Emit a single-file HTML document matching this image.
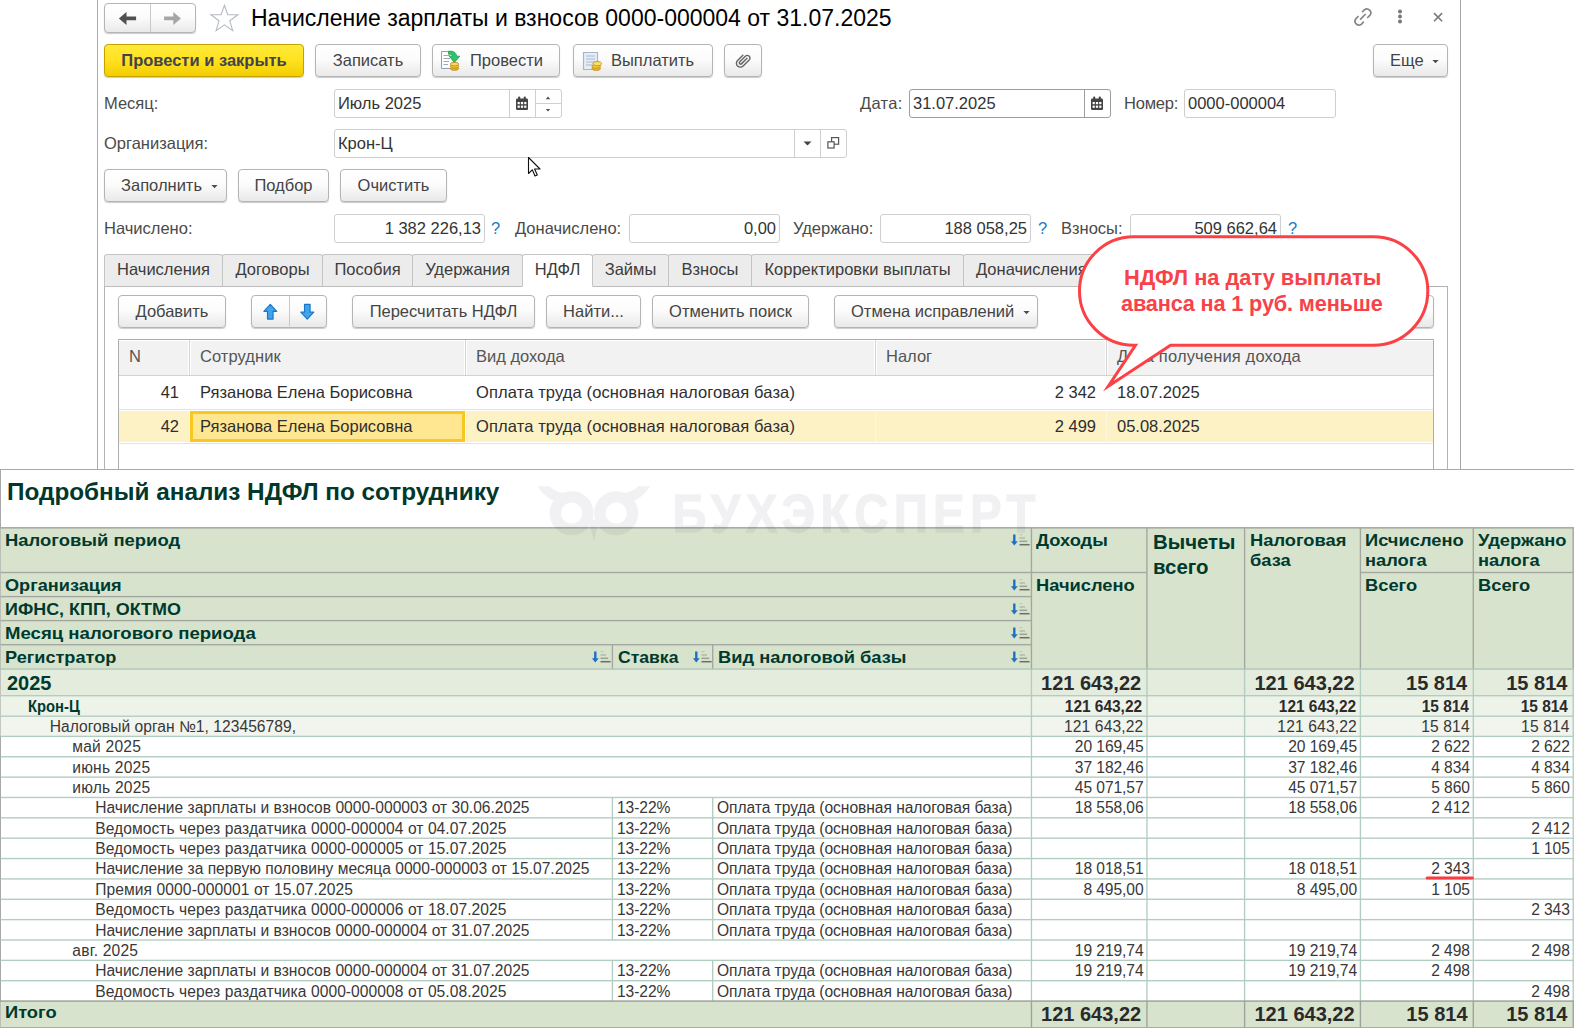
<!DOCTYPE html><html lang="ru"><head><meta charset="utf-8"><title>Начисление зарплаты и взносов</title><style>
*{box-sizing:border-box;margin:0;padding:0}
html,body{width:1574px;height:1028px;overflow:hidden;background:#fff}
body{font-family:"Liberation Sans",sans-serif;font-size:16.5px;color:#333;position:relative}
.a{position:absolute;white-space:nowrap}
.t{position:absolute;white-space:nowrap;line-height:20px;height:20px;color:#4a4a4a;margin-top:-1px}
.btn{position:absolute;border:1px solid #b4b4b4;border-radius:4px;background:linear-gradient(#ffffff 0%,#fcfcfc 45%,#e9e9e9 100%);box-shadow:0 1px 1px rgba(0,0,0,.2);color:#444;text-align:center;white-space:nowrap;height:33px;line-height:30px;font-size:16.5px}
.btn.y{background:linear-gradient(#ffea3a 0%,#ffe11f 50%,#f2ce00 100%);border-color:#c4a300;color:#43434c;font-weight:bold}
.inp{position:absolute;border:1px solid #cfcfcf;border-radius:3px;background:#fff;height:29px;line-height:27px;color:#333;white-space:nowrap;padding:0 3px}
.inp.r{text-align:right}
.q{position:absolute;color:#1a7ac4;font-size:16.5px;line-height:20px;margin-top:-1px}
.tab{position:absolute;top:254px;height:33px;border:1px solid #c4c4c4;border-bottom:1px solid #bdbdbd;background:#ececec;border-radius:3px 3px 0 0;line-height:29px;text-align:center;color:#3c3c3c;white-space:nowrap}
.tab.act{background:#fff;border-bottom-color:#fff;z-index:2}
.vl{position:absolute;width:1px;background:#b0b0b0}
.hl{position:absolute;height:1px;background:#b0b0b0}
.th{position:absolute;top:340px;height:35px;line-height:33px;color:#555;white-space:nowrap;padding-left:10px}
.td{position:absolute;height:33px;line-height:32px;color:#2e2e2e;white-space:nowrap}
/* report */
.rp{position:absolute;left:0;top:469px;width:1574px;height:559px;background:#fff;border-top:1px solid #a8a8a8;border-left:1px solid #a8a8a8}
.hc{position:absolute;background:#d8e4cd;color:#003d2f;font-weight:bold;font-size:16px;line-height:18px;white-space:nowrap;overflow:hidden}
.rw{position:absolute;left:1px;width:1573px}
.c{position:absolute;white-space:nowrap;color:#333;font-size:15.5px}
.n{position:absolute;white-space:nowrap;color:#333;font-size:15.5px;text-align:right}
</style></head><body>
<div class="vl" style="left:97px;top:0;height:469px;background:#ababab"></div>
<div class="vl" style="left:1460px;top:0;height:469px;background:#a6a6a6"></div>
<div class="btn" style="left:104px;top:3px;width:92px;height:30px"></div>
<div class="vl" style="left:150px;top:4px;height:28px;background:#c8c8c8"></div>
<svg class="a" style="left:117px;top:10px" width="22" height="17" viewBox="0 0 22 17"><path d="M1.9 8.4 L9.5 2 V6.6 H19.1 V10.2 H9.5 V14.9 Z" fill="#505050"/></svg>
<svg class="a" style="left:162px;top:10px" width="22" height="17" viewBox="0 0 22 17"><path d="M18.9 8.4 L11.3 2 V6.6 H2.1 V10.2 H11.3 V14.9 Z" fill="#a6a6a6"/></svg>
<svg class="a" style="left:209px;top:3px" width="32" height="30" viewBox="0 0 32 30"><path d="M15.4 2.3 L18.7 11.6 L28.9 11.8 L20.8 17.8 L23.7 27.6 L15.4 21.9 L7.1 27.6 L10 17.8 L1.9 11.8 L12.1 11.6 Z" fill="#fff" stroke="#b3bac2" stroke-width="1.1" stroke-linejoin="miter"/></svg>
<div class="a" style="left:251px;top:4px;font-size:23px;line-height:28px;color:#000">Начисление зарплаты и взносов 0000-000004 от 31.07.2025</div>
<svg class="a" style="left:1352px;top:6px" width="22" height="22" viewBox="0 0 22 22" fill="none" stroke="#868686" stroke-width="1.7" stroke-linecap="round"><path d="M8.6 13.1 L13.2 8.5"/><path d="M10.6 5.6 l1.7-1.7 a3.9 3.9 0 0 1 5.5 5.5 l-2.1 2.1"/><path d="M11.4 16.2 l-1.9 1.9 a3.9 3.9 0 0 1-5.5-5.5 l2.1-2.1"/></svg>
<svg class="a" style="left:1396px;top:8px" width="8" height="18" viewBox="0 0 8 18"><circle cx="4" cy="3.6" r="2" fill="#787878"/><circle cx="4" cy="8.6" r="2" fill="#787878"/><circle cx="4" cy="13.5" r="2" fill="#787878"/></svg>
<svg class="a" style="left:1431px;top:10px" width="14" height="14" viewBox="0 0 14 14" stroke="#7a7a7a" stroke-width="1.6"><path d="M3 3.1 L11.1 11.2 M11.1 3.1 L3 11.2"/></svg>
<div class="btn y" style="left:104px;top:44px;width:200px">Провести и закрыть</div>
<div class="btn" style="left:315px;top:44px;width:106px">Записать</div>
<div class="btn" style="left:432px;top:44px;width:128px;text-align:left;padding-left:37px">Провести</div>
<div class="btn" style="left:573px;top:44px;width:140px;text-align:left;padding-left:37px">Выплатить</div>
<div class="btn" style="left:724px;top:44px;width:38px"></div>
<div class="btn" style="left:1373px;top:44px;width:75px;text-align:left;padding-left:16px">Еще</div>
<svg class="a" style="left:439px;top:49px" width="24" height="24" viewBox="0 0 24 24">
<path d="M2.5 2.5 H12 L14.5 5 V19.5 H2.5 Z" fill="#fdfdfd" stroke="#8e9fb3" stroke-width="1"/>
<path d="M4.5 6.5H11M4.5 9.5H11M4.5 12.5H10M4.5 15.5H9" stroke="#9ab" stroke-width="1"/>
<path d="M9.5 2.3 C14 1.6 17.3 3.4 17.6 7.2 H20.8 L15.4 13.4 L10.2 7.2 H13.3 C13.2 5.6 12 4.9 9.5 5.2 Z" fill="#2fc26a" stroke="#18a050" stroke-width=".8" stroke-linejoin="round"/>
<ellipse cx="15.5" cy="19.5" rx="4.2" ry="1.8" fill="#e8b22a" stroke="#b98512" stroke-width=".8"/>
<ellipse cx="15.5" cy="17.3" rx="4.2" ry="1.8" fill="#f2c63f" stroke="#b98512" stroke-width=".8"/>
<ellipse cx="15.5" cy="15.1" rx="4.2" ry="1.8" fill="#f8d862" stroke="#b98512" stroke-width=".8"/>
</svg>
<svg class="a" style="left:581px;top:49px" width="26" height="24" viewBox="0 0 26 24">
<path d="M2.5 3.5 H16.5 V20.5 H2.5 Z" fill="#e6edf5" stroke="#a5b6cc" stroke-width="1.2"/>
<path d="M5 7H14M5 10H14M5 13H14M5 16H11" stroke="#a9b8ca" stroke-width="1"/>
<ellipse cx="15.2" cy="19.4" rx="4.3" ry="2" fill="#e9b732" stroke="#c08c14" stroke-width=".8"/>
<ellipse cx="15.2" cy="17.2" rx="4.3" ry="2" fill="#f3c945" stroke="#c08c14" stroke-width=".8"/>
<ellipse cx="16.2" cy="14.6" rx="4.3" ry="2.1" fill="#f9dc6c" stroke="#c08c14" stroke-width=".8"/>
</svg>
<svg class="a" style="left:734.5px;top:51.5px" width="16.6" height="18.3" viewBox="0 0 20 22" fill="none" stroke="#666" stroke-width="1.75" stroke-linecap="round" stroke-linejoin="round">
<path d="M14.5 7.5 L8 14 a1.6 1.6 0 0 1 -2.3 -2.3 L12.5 5 a3.2 3.2 0 0 1 4.6 4.6 L9.8 16.8 a4.7 4.7 0 0 1 -6.7 -6.7 L9.5 3.8"/></svg>
<svg class="a" style="left:1431px;top:58px" width="9" height="6" viewBox="0 0 9 6"><path d="M1.4 1.9 H7.6 L4.5 5.2 Z" fill="#4d4d4d"/></svg>
<div class="t" style="left:104px;top:94px">Месяц:</div>
<div class="inp" style="left:334px;top:89px;width:228px">Июль 2025</div>
<div class="vl" style="left:509px;top:90px;height:27px;background:#cfcfcf"></div>
<div class="vl" style="left:535px;top:90px;height:27px;background:#cfcfcf"></div>
<div class="hl" style="left:536px;top:103px;width:25px;background:#cfcfcf"></div>
<svg class="a" style="left:515px;top:96px" width="14" height="15" viewBox="0 0 14 15"><rect x="1" y="2.5" width="12" height="11.5" rx="1.3" fill="#444"/><rect x="3.2" y="0.5" width="2" height="4" rx=".8" fill="#444"/><rect x="8.8" y="0.5" width="2" height="4" rx=".8" fill="#444"/><g fill="#fff"><rect x="2.6" y="6" width="2.2" height="2.2"/><rect x="5.9" y="6" width="2.2" height="2.2"/><rect x="9.2" y="6" width="2.2" height="2.2"/><rect x="2.6" y="9.6" width="2.2" height="2.2"/><rect x="5.9" y="9.6" width="2.2" height="2.2"/><rect x="9.2" y="9.6" width="2.2" height="2.2"/></g></svg>
<svg class="a" style="left:544px;top:95px" width="8" height="5" viewBox="0 0 8 5"><path d="M1.8 4.2 L4 1.6 L6.2 4.2 Z" fill="#4d4d4d"/></svg>
<svg class="a" style="left:544px;top:108px" width="8" height="5" viewBox="0 0 8 5"><path d="M1.8 0.9 L4 3.5 L6.2 0.9 Z" fill="#4d4d4d"/></svg>
<div class="t" style="left:860px;top:94px;letter-spacing:0.3px">Дата:</div>
<div class="inp" style="left:909px;top:89px;width:202px;border-color:#9d9d9d">31.07.2025</div>
<div class="vl" style="left:1084px;top:90px;height:27px;background:#9d9d9d"></div>
<svg class="a" style="left:1090px;top:96px" width="14" height="15" viewBox="0 0 14 15"><rect x="1" y="2.5" width="12" height="11.5" rx="1.3" fill="#444"/><rect x="3.2" y="0.5" width="2" height="4" rx=".8" fill="#444"/><rect x="8.8" y="0.5" width="2" height="4" rx=".8" fill="#444"/><g fill="#fff"><rect x="2.6" y="6" width="2.2" height="2.2"/><rect x="5.9" y="6" width="2.2" height="2.2"/><rect x="9.2" y="6" width="2.2" height="2.2"/><rect x="2.6" y="9.6" width="2.2" height="2.2"/><rect x="5.9" y="9.6" width="2.2" height="2.2"/><rect x="9.2" y="9.6" width="2.2" height="2.2"/></g></svg>
<div class="t" style="left:1124px;top:94px;letter-spacing:-0.2px">Номер:</div>
<div class="inp" style="left:1184px;top:89px;width:152px">0000-000004</div>
<div class="t" style="left:104px;top:134px">Организация:</div>
<div class="inp" style="left:334px;top:129px;width:513px">Крон-Ц</div>
<div class="vl" style="left:794px;top:130px;height:27px;background:#cfcfcf"></div>
<div class="vl" style="left:820px;top:130px;height:27px;background:#cfcfcf"></div>
<svg class="a" style="left:803px;top:141px" width="9" height="5" viewBox="0 0 9 5"><path d="M0.5 0.5 H8.5 L4.5 4.5 Z" fill="#444"/></svg>
<svg class="a" style="left:826px;top:136px" width="14" height="14" viewBox="0 0 14 14" fill="#fff" stroke="#555" stroke-width="1.2"><rect x="5.6" y="1.6" width="7" height="6.6"/><rect x="1.9" y="5.8" width="6.2" height="6.2"/></svg>
<svg class="a" style="left:527px;top:156px" width="16" height="22" viewBox="0 0 16 22"><path d="M1.5 1.5 V17.5 L5.3 13.8 L8 20 L10.3 19 L7.6 13 H13 Z" fill="#fff" stroke="#111" stroke-width="1.1" stroke-linejoin="round"/></svg>
<div class="btn" style="left:104px;top:169px;width:123px;text-align:left;padding-left:16px">Заполнить</div>
<svg class="a" style="left:210.3px;top:182.7px" width="9" height="6" viewBox="0 0 9 6"><path d="M1.4 1.9 H7.6 L4.5 5.2 Z" fill="#4d4d4d"/></svg>
<div class="btn" style="left:238px;top:169px;width:91px">Подбор</div>
<div class="btn" style="left:340px;top:169px;width:107px">Очистить</div>
<div class="t" style="left:104px;top:219px">Начислено:</div>
<div class="inp r" style="left:334px;top:214px;width:151px">1 382 226,13</div>
<div class="q" style="left:491px;top:219px">?</div>
<div class="t" style="left:515px;top:219px">Доначислено:</div>
<div class="inp r" style="left:629px;top:214px;width:151px">0,00</div>
<div class="t" style="left:793px;top:219px">Удержано:</div>
<div class="inp r" style="left:880px;top:214px;width:151px">188 058,25</div>
<div class="q" style="left:1038px;top:219px">?</div>
<div class="t" style="left:1061px;top:219px">Взносы:</div>
<div class="inp r" style="left:1130px;top:214px;width:151px">509 662,64</div>
<div class="q" style="left:1288px;top:219px">?</div>
<div class="hl" style="left:104px;top:286px;width:1344px;background:#b2b2b2"></div>
<div class="vl" style="left:104px;top:286px;height:183px;background:#b2b2b2"></div>
<div class="vl" style="left:1447px;top:286px;height:183px;background:#b2b2b2"></div>
<div class="tab" style="left:104px;width:119px">Начисления</div>
<div class="tab" style="left:222px;width:101px">Договоры</div>
<div class="tab" style="left:322px;width:91px">Пособия</div>
<div class="tab" style="left:412px;width:111px">Удержания</div>
<div class="tab act" style="left:522px;width:71px">НДФЛ</div>
<div class="tab" style="left:592px;width:77px">Займы</div>
<div class="tab" style="left:668px;width:84px">Взносы</div>
<div class="tab" style="left:751px;width:213px">Корректировки выплаты</div>
<div class="tab" style="left:963px;width:237px;text-align:left;padding-left:12px;overflow:hidden">Доначисления, перерасчеты</div>
<div class="btn" style="left:118px;top:295px;width:108px">Добавить</div>
<div class="btn" style="left:251px;top:295px;width:76px"></div>
<div class="vl" style="left:289px;top:296px;height:30px;background:#c8c8c8"></div>
<svg class="a" style="left:261.8px;top:303.3px" width="16.6" height="17.5" viewBox="0 0 18 19"><path d="M9 1.5 L16 9 H12 V17.5 H6 V9 H2 Z" fill="#40a5ee" stroke="#1b76c6" stroke-width="1.3" stroke-linejoin="round"/></svg>
<svg class="a" style="left:298.8px;top:303.3px" width="16.6" height="17.5" viewBox="0 0 18 19"><path d="M9 17.5 L16 10 H12 V1.5 H6 V10 H2 Z" fill="#40a5ee" stroke="#1b76c6" stroke-width="1.3" stroke-linejoin="round"/></svg>
<div class="btn" style="left:352px;top:295px;width:183px">Пересчитать НДФЛ</div>
<div class="btn" style="left:546px;top:295px;width:95px">Найти...</div>
<div class="btn" style="left:652px;top:295px;width:157px">Отменить поиск</div>
<div class="btn" style="left:834px;top:295px;width:204px;text-align:left;padding-left:16px">Отмена исправлений</div>
<svg class="a" style="left:1021.5px;top:309px" width="9" height="6" viewBox="0 0 9 6"><path d="M1.4 1.9 H7.6 L4.5 5.2 Z" fill="#4d4d4d"/></svg>
<div class="btn" style="left:1360px;top:295px;width:74px"></div>
<div class="a" style="left:118px;top:339px;width:1316px;height:130px;border:1px solid #adadad;border-bottom:none;background:#fff"></div>
<div class="a" style="left:119px;top:341px;width:69px;height:34px;background:#f2f2f2"></div>
<div class="th" style="left:119px;width:70px;letter-spacing:0px">N</div>
<div class="a" style="left:191px;top:341px;width:273px;height:34px;background:#f2f2f2"></div>
<div class="th" style="left:190px;width:275px;letter-spacing:0.06px">Сотрудник</div>
<div class="a" style="left:467px;top:341px;width:407px;height:34px;background:#f2f2f2"></div>
<div class="th" style="left:466px;width:409px;letter-spacing:0px">Вид дохода</div>
<div class="a" style="left:877px;top:341px;width:228px;height:34px;background:#f2f2f2"></div>
<div class="th" style="left:876px;width:230px;letter-spacing:0px">Налог</div>
<div class="a" style="left:1108px;top:341px;width:325px;height:34px;background:#f2f2f2"></div>
<div class="th" style="left:1107px;width:326px;letter-spacing:0.15px">Дата получения дохода</div>
<div class="hl" style="left:119px;top:375px;width:1314px;background:#d2d2d2"></div>
<div class="vl" style="left:189px;top:340px;height:35px;background:#d4d4d4"></div>
<div class="vl" style="left:465px;top:340px;height:35px;background:#d4d4d4"></div>
<div class="vl" style="left:875px;top:340px;height:35px;background:#d4d4d4"></div>
<div class="vl" style="left:1106px;top:340px;height:35px;background:#d4d4d4"></div>
<div class="hl" style="left:119px;top:409px;width:1314px;background:#e3e3e3"></div>
<div class="a" style="left:119px;top:411px;width:1314px;height:31px;background:#fdf1c6"></div>
<div class="vl" style="left:189px;top:411px;height:31px;background:#fff8e0"></div>
<div class="vl" style="left:465px;top:411px;height:31px;background:#fff8e0"></div>
<div class="vl" style="left:875px;top:411px;height:31px;background:#fff8e0"></div>
<div class="vl" style="left:1106px;top:411px;height:31px;background:#fff8e0"></div>
<div class="hl" style="left:119px;top:443px;width:1314px;background:#e3e3e3"></div>
<div class="a" style="left:190px;top:411px;width:275px;height:31px;background:#ffe691;border:3px solid #fac71f"></div>
<div class="td" style="left:119px;top:376px;width:60px;text-align:right">41</div>
<div class="td" style="left:200px;top:376px">Рязанова Елена Борисовна</div>
<div class="td" style="left:476px;top:376px;letter-spacing:0.12px">Оплата труда (основная налоговая база)</div>
<div class="td" style="left:876px;top:376px;width:220px;text-align:right">2 342</div>
<div class="td" style="left:1117px;top:376px">18.07.2025</div>
<div class="td" style="left:119px;top:410px;width:60px;text-align:right">42</div>
<div class="td" style="left:200px;top:410px">Рязанова Елена Борисовна</div>
<div class="td" style="left:476px;top:410px;letter-spacing:0.12px">Оплата труда (основная налоговая база)</div>
<div class="td" style="left:876px;top:410px;width:220px;text-align:right">2 499</div>
<div class="td" style="left:1117px;top:410px">05.08.2025</div>
<svg class="a" style="left:1070px;top:226px;z-index:5" width="370" height="180" viewBox="1070 226 370 180">
<path d="M1133.75 236.8 H1373.55 A54.25 54.25 0 0 1 1373.55 345.3 H1170.5 L1108.3 386.2 L1135.5 345.3 H1133.75 A54.25 54.25 0 0 1 1133.75 236.8 Z" fill="#fff" stroke="#fb4146" stroke-width="3" stroke-linejoin="miter" stroke-miterlimit="10"/>
<text x="1252.7" y="284.7" text-anchor="middle" font-family="Liberation Sans, sans-serif" font-weight="bold" font-size="21.8" fill="#f8424a">НДФЛ на дату выплаты</text>
<text x="1251.8" y="310.7" text-anchor="middle" font-family="Liberation Sans, sans-serif" font-weight="bold" font-size="21.7" letter-spacing="-0.15" fill="#f8424a">аванса на 1 руб. меньше</text>
</svg>
<div class="rp"></div>
<svg class="a" style="left:0;top:0" width="1574" height="1028" viewBox="0 0 1574 1028"><rect x="0.6" y="527.8" width="1573.4" height="141.3" fill="#d7e3cc"/><rect x="0.6" y="669.1" width="1573.4" height="26.6" fill="#e4eddd"/><rect x="0.6" y="695.7" width="1573.4" height="20.5" fill="#eef3ea"/><rect x="0.6" y="716.2" width="1573.4" height="20.2" fill="#f1f5ee"/><rect x="1030.78" y="669.1" width="1.35" height="26.6" fill="#b1ccc0"/><rect x="1146.28" y="669.1" width="1.35" height="26.6" fill="#b1ccc0"/><rect x="1243.92" y="669.1" width="1.35" height="26.6" fill="#b1ccc0"/><rect x="1359.73" y="669.1" width="1.35" height="26.6" fill="#b1ccc0"/><rect x="1472.62" y="669.1" width="1.35" height="26.6" fill="#b1ccc0"/><rect x="1572.53" y="669.1" width="1.35" height="26.6" fill="#b1ccc0"/><rect x="1030.78" y="695.7" width="1.35" height="20.5" fill="#b1ccc0"/><rect x="1146.28" y="695.7" width="1.35" height="20.5" fill="#b1ccc0"/><rect x="1243.92" y="695.7" width="1.35" height="20.5" fill="#b1ccc0"/><rect x="1359.73" y="695.7" width="1.35" height="20.5" fill="#b1ccc0"/><rect x="1472.62" y="695.7" width="1.35" height="20.5" fill="#b1ccc0"/><rect x="1572.53" y="695.7" width="1.35" height="20.5" fill="#b1ccc0"/><rect x="0.6" y="695.03" width="1573.4" height="1.35" fill="#b1ccc0"/><rect x="1030.78" y="716.2" width="1.35" height="20.2" fill="#b1ccc0"/><rect x="1146.28" y="716.2" width="1.35" height="20.2" fill="#b1ccc0"/><rect x="1243.92" y="716.2" width="1.35" height="20.2" fill="#b1ccc0"/><rect x="1359.73" y="716.2" width="1.35" height="20.2" fill="#b1ccc0"/><rect x="1472.62" y="716.2" width="1.35" height="20.2" fill="#b1ccc0"/><rect x="1572.53" y="716.2" width="1.35" height="20.2" fill="#b1ccc0"/><rect x="0.6" y="715.53" width="1573.4" height="1.35" fill="#b1ccc0"/><rect x="1030.78" y="736.4" width="1.35" height="20.36" fill="#b1ccc0"/><rect x="1146.28" y="736.4" width="1.35" height="20.36" fill="#b1ccc0"/><rect x="1243.92" y="736.4" width="1.35" height="20.36" fill="#b1ccc0"/><rect x="1359.73" y="736.4" width="1.35" height="20.36" fill="#b1ccc0"/><rect x="1472.62" y="736.4" width="1.35" height="20.36" fill="#b1ccc0"/><rect x="1572.53" y="736.4" width="1.35" height="20.36" fill="#b1ccc0"/><rect x="0.6" y="735.73" width="1573.4" height="1.35" fill="#b1ccc0"/><rect x="1030.78" y="756.76" width="1.35" height="20.36" fill="#b1ccc0"/><rect x="1146.28" y="756.76" width="1.35" height="20.36" fill="#b1ccc0"/><rect x="1243.92" y="756.76" width="1.35" height="20.36" fill="#b1ccc0"/><rect x="1359.73" y="756.76" width="1.35" height="20.36" fill="#b1ccc0"/><rect x="1472.62" y="756.76" width="1.35" height="20.36" fill="#b1ccc0"/><rect x="1572.53" y="756.76" width="1.35" height="20.36" fill="#b1ccc0"/><rect x="0.6" y="756.09" width="1573.4" height="1.35" fill="#b1ccc0"/><rect x="1030.78" y="777.12" width="1.35" height="20.36" fill="#b1ccc0"/><rect x="1146.28" y="777.12" width="1.35" height="20.36" fill="#b1ccc0"/><rect x="1243.92" y="777.12" width="1.35" height="20.36" fill="#b1ccc0"/><rect x="1359.73" y="777.12" width="1.35" height="20.36" fill="#b1ccc0"/><rect x="1472.62" y="777.12" width="1.35" height="20.36" fill="#b1ccc0"/><rect x="1572.53" y="777.12" width="1.35" height="20.36" fill="#b1ccc0"/><rect x="0.6" y="776.45" width="1573.4" height="1.35" fill="#b1ccc0"/><rect x="611.73" y="797.48" width="1.35" height="20.36" fill="#b1ccc0"/><rect x="712.03" y="797.48" width="1.35" height="20.36" fill="#b1ccc0"/><rect x="1030.78" y="797.48" width="1.35" height="20.36" fill="#b1ccc0"/><rect x="1146.28" y="797.48" width="1.35" height="20.36" fill="#b1ccc0"/><rect x="1243.92" y="797.48" width="1.35" height="20.36" fill="#b1ccc0"/><rect x="1359.73" y="797.48" width="1.35" height="20.36" fill="#b1ccc0"/><rect x="1472.62" y="797.48" width="1.35" height="20.36" fill="#b1ccc0"/><rect x="1572.53" y="797.48" width="1.35" height="20.36" fill="#b1ccc0"/><rect x="0.6" y="796.81" width="1573.4" height="1.35" fill="#b1ccc0"/><rect x="611.73" y="817.84" width="1.35" height="20.36" fill="#b1ccc0"/><rect x="712.03" y="817.84" width="1.35" height="20.36" fill="#b1ccc0"/><rect x="1030.78" y="817.84" width="1.35" height="20.36" fill="#b1ccc0"/><rect x="1146.28" y="817.84" width="1.35" height="20.36" fill="#b1ccc0"/><rect x="1243.92" y="817.84" width="1.35" height="20.36" fill="#b1ccc0"/><rect x="1359.73" y="817.84" width="1.35" height="20.36" fill="#b1ccc0"/><rect x="1472.62" y="817.84" width="1.35" height="20.36" fill="#b1ccc0"/><rect x="1572.53" y="817.84" width="1.35" height="20.36" fill="#b1ccc0"/><rect x="0.6" y="817.16" width="1573.4" height="1.35" fill="#b1ccc0"/><rect x="611.73" y="838.2" width="1.35" height="20.36" fill="#b1ccc0"/><rect x="712.03" y="838.2" width="1.35" height="20.36" fill="#b1ccc0"/><rect x="1030.78" y="838.2" width="1.35" height="20.36" fill="#b1ccc0"/><rect x="1146.28" y="838.2" width="1.35" height="20.36" fill="#b1ccc0"/><rect x="1243.92" y="838.2" width="1.35" height="20.36" fill="#b1ccc0"/><rect x="1359.73" y="838.2" width="1.35" height="20.36" fill="#b1ccc0"/><rect x="1472.62" y="838.2" width="1.35" height="20.36" fill="#b1ccc0"/><rect x="1572.53" y="838.2" width="1.35" height="20.36" fill="#b1ccc0"/><rect x="0.6" y="837.52" width="1573.4" height="1.35" fill="#b1ccc0"/><rect x="611.73" y="858.56" width="1.35" height="20.36" fill="#b1ccc0"/><rect x="712.03" y="858.56" width="1.35" height="20.36" fill="#b1ccc0"/><rect x="1030.78" y="858.56" width="1.35" height="20.36" fill="#b1ccc0"/><rect x="1146.28" y="858.56" width="1.35" height="20.36" fill="#b1ccc0"/><rect x="1243.92" y="858.56" width="1.35" height="20.36" fill="#b1ccc0"/><rect x="1359.73" y="858.56" width="1.35" height="20.36" fill="#b1ccc0"/><rect x="1472.62" y="858.56" width="1.35" height="20.36" fill="#b1ccc0"/><rect x="1572.53" y="858.56" width="1.35" height="20.36" fill="#b1ccc0"/><rect x="0.6" y="857.88" width="1573.4" height="1.35" fill="#b1ccc0"/><rect x="611.73" y="878.92" width="1.35" height="20.36" fill="#b1ccc0"/><rect x="712.03" y="878.92" width="1.35" height="20.36" fill="#b1ccc0"/><rect x="1030.78" y="878.92" width="1.35" height="20.36" fill="#b1ccc0"/><rect x="1146.28" y="878.92" width="1.35" height="20.36" fill="#b1ccc0"/><rect x="1243.92" y="878.92" width="1.35" height="20.36" fill="#b1ccc0"/><rect x="1359.73" y="878.92" width="1.35" height="20.36" fill="#b1ccc0"/><rect x="1472.62" y="878.92" width="1.35" height="20.36" fill="#b1ccc0"/><rect x="1572.53" y="878.92" width="1.35" height="20.36" fill="#b1ccc0"/><rect x="0.6" y="878.25" width="1573.4" height="1.35" fill="#b1ccc0"/><rect x="611.73" y="899.28" width="1.35" height="20.36" fill="#b1ccc0"/><rect x="712.03" y="899.28" width="1.35" height="20.36" fill="#b1ccc0"/><rect x="1030.78" y="899.28" width="1.35" height="20.36" fill="#b1ccc0"/><rect x="1146.28" y="899.28" width="1.35" height="20.36" fill="#b1ccc0"/><rect x="1243.92" y="899.28" width="1.35" height="20.36" fill="#b1ccc0"/><rect x="1359.73" y="899.28" width="1.35" height="20.36" fill="#b1ccc0"/><rect x="1472.62" y="899.28" width="1.35" height="20.36" fill="#b1ccc0"/><rect x="1572.53" y="899.28" width="1.35" height="20.36" fill="#b1ccc0"/><rect x="0.6" y="898.61" width="1573.4" height="1.35" fill="#b1ccc0"/><rect x="611.73" y="919.64" width="1.35" height="20.36" fill="#b1ccc0"/><rect x="712.03" y="919.64" width="1.35" height="20.36" fill="#b1ccc0"/><rect x="1030.78" y="919.64" width="1.35" height="20.36" fill="#b1ccc0"/><rect x="1146.28" y="919.64" width="1.35" height="20.36" fill="#b1ccc0"/><rect x="1243.92" y="919.64" width="1.35" height="20.36" fill="#b1ccc0"/><rect x="1359.73" y="919.64" width="1.35" height="20.36" fill="#b1ccc0"/><rect x="1472.62" y="919.64" width="1.35" height="20.36" fill="#b1ccc0"/><rect x="1572.53" y="919.64" width="1.35" height="20.36" fill="#b1ccc0"/><rect x="0.6" y="918.97" width="1573.4" height="1.35" fill="#b1ccc0"/><rect x="1030.78" y="940.0" width="1.35" height="20.36" fill="#b1ccc0"/><rect x="1146.28" y="940.0" width="1.35" height="20.36" fill="#b1ccc0"/><rect x="1243.92" y="940.0" width="1.35" height="20.36" fill="#b1ccc0"/><rect x="1359.73" y="940.0" width="1.35" height="20.36" fill="#b1ccc0"/><rect x="1472.62" y="940.0" width="1.35" height="20.36" fill="#b1ccc0"/><rect x="1572.53" y="940.0" width="1.35" height="20.36" fill="#b1ccc0"/><rect x="0.6" y="939.33" width="1573.4" height="1.35" fill="#b1ccc0"/><rect x="611.73" y="960.36" width="1.35" height="20.36" fill="#b1ccc0"/><rect x="712.03" y="960.36" width="1.35" height="20.36" fill="#b1ccc0"/><rect x="1030.78" y="960.36" width="1.35" height="20.36" fill="#b1ccc0"/><rect x="1146.28" y="960.36" width="1.35" height="20.36" fill="#b1ccc0"/><rect x="1243.92" y="960.36" width="1.35" height="20.36" fill="#b1ccc0"/><rect x="1359.73" y="960.36" width="1.35" height="20.36" fill="#b1ccc0"/><rect x="1472.62" y="960.36" width="1.35" height="20.36" fill="#b1ccc0"/><rect x="1572.53" y="960.36" width="1.35" height="20.36" fill="#b1ccc0"/><rect x="0.6" y="959.68" width="1573.4" height="1.35" fill="#b1ccc0"/><rect x="611.73" y="980.72" width="1.35" height="20.36" fill="#b1ccc0"/><rect x="712.03" y="980.72" width="1.35" height="20.36" fill="#b1ccc0"/><rect x="1030.78" y="980.72" width="1.35" height="20.36" fill="#b1ccc0"/><rect x="1146.28" y="980.72" width="1.35" height="20.36" fill="#b1ccc0"/><rect x="1243.92" y="980.72" width="1.35" height="20.36" fill="#b1ccc0"/><rect x="1359.73" y="980.72" width="1.35" height="20.36" fill="#b1ccc0"/><rect x="1472.62" y="980.72" width="1.35" height="20.36" fill="#b1ccc0"/><rect x="1572.53" y="980.72" width="1.35" height="20.36" fill="#b1ccc0"/><rect x="0.6" y="980.05" width="1573.4" height="1.35" fill="#b1ccc0"/><rect x="0.6" y="1001.08" width="1573.4" height="26.92" fill="#d7e3cc"/><rect x="0" y="526.95" width="1574" height="1.7" fill="#a9aca7"/><rect x="0.6" y="571.83" width="1146.35" height="1.35" fill="#a3a6a1"/><rect x="1360.4" y="571.83" width="213.6" height="1.35" fill="#a3a6a1"/><rect x="0.6" y="595.93" width="1030.85" height="1.35" fill="#a3a6a1"/><rect x="0.6" y="619.93" width="1030.85" height="1.35" fill="#a3a6a1"/><rect x="0.6" y="644.03" width="1030.85" height="1.35" fill="#a3a6a1"/><rect x="1030.78" y="527.8" width="1.35" height="141.3" fill="#a3a6a1"/><rect x="1146.28" y="527.8" width="1.35" height="141.3" fill="#a3a6a1"/><rect x="1243.92" y="527.8" width="1.35" height="141.3" fill="#a3a6a1"/><rect x="1359.73" y="527.8" width="1.35" height="141.3" fill="#a3a6a1"/><rect x="1472.62" y="527.8" width="1.35" height="141.3" fill="#a3a6a1"/><rect x="1572.53" y="527.8" width="1.35" height="141.3" fill="#a3a6a1"/><rect x="611.73" y="644.7" width="1.35" height="24.4" fill="#a3a6a1"/><rect x="712.03" y="644.7" width="1.35" height="24.4" fill="#a3a6a1"/><rect x="0.6" y="668.43" width="1573.4" height="1.35" fill="#aec6ba"/><rect x="0" y="1000.33" width="1574" height="1.5" fill="#9da39c"/><rect x="1030.78" y="1001.08" width="1.35" height="26.92" fill="#9da39c"/><rect x="1146.28" y="1001.08" width="1.35" height="26.92" fill="#9da39c"/><rect x="1243.92" y="1001.08" width="1.35" height="26.92" fill="#9da39c"/><rect x="1359.73" y="1001.08" width="1.35" height="26.92" fill="#9da39c"/><rect x="1472.62" y="1001.08" width="1.35" height="26.92" fill="#9da39c"/><rect x="1572.53" y="1001.08" width="1.35" height="26.92" fill="#9da39c"/><rect x="0" y="1027.0" width="1574" height="1.2" fill="#a9aca7"/></svg>
<div class="a" style="top:476px;line-height:32px;height:32px;font-size:24.3px;color:#00382c;font-weight:bold;left:7px;">Подробный анализ НДФЛ по сотруднику</div>
<div class="a" style="top:530px;line-height:22px;height:22px;font-size:17px;color:#003a2e;font-weight:bold;left:5.3px;transform:scaleX(1.084);transform-origin:0 50%;">Налоговый период</div>
<div class="a" style="top:575px;line-height:22px;height:22px;font-size:17px;color:#003a2e;font-weight:bold;left:5.3px;transform:scaleX(1.0666);transform-origin:0 50%;">Организация</div>
<div class="a" style="top:599px;line-height:22px;height:22px;font-size:17px;color:#003a2e;font-weight:bold;left:5.3px;transform:scaleX(1.055);transform-origin:0 50%;">ИФНС, КПП, ОКТМО</div>
<div class="a" style="top:623px;line-height:22px;height:22px;font-size:17px;color:#003a2e;font-weight:bold;left:5.3px;transform:scaleX(1.093);transform-origin:0 50%;">Месяц налогового периода</div>
<div class="a" style="top:647px;line-height:22px;height:22px;font-size:17px;color:#003a2e;font-weight:bold;left:5.3px;transform:scaleX(1.066);transform-origin:0 50%;">Регистратор</div>
<div class="a" style="top:647px;line-height:22px;height:22px;font-size:17px;color:#003a2e;font-weight:bold;left:617.5px;transform:scaleX(1.033);transform-origin:0 50%;">Ставка</div>
<div class="a" style="top:647px;line-height:22px;height:22px;font-size:17px;color:#003a2e;font-weight:bold;left:717.5px;transform:scaleX(1.076);transform-origin:0 50%;">Вид налоговой базы</div>
<div class="a" style="top:530px;line-height:22px;height:22px;font-size:17px;color:#003a2e;font-weight:bold;left:1036px;transform:scaleX(1.076);transform-origin:0 50%;">Доходы</div>
<div class="a" style="top:575px;line-height:22px;height:22px;font-size:17px;color:#003a2e;font-weight:bold;left:1036px;transform:scaleX(1.076);transform-origin:0 50%;">Начислено</div>
<div class="a" style="top:529px;line-height:26px;height:26px;font-size:20px;color:#003a2e;font-weight:bold;left:1153.3px;transform:scaleX(1.02);transform-origin:0 50%;">Вычеты</div>
<div class="a" style="top:554px;line-height:26px;height:26px;font-size:20px;color:#003a2e;font-weight:bold;left:1153.3px;transform:scaleX(1.02);transform-origin:0 50%;">всего</div>
<div class="a" style="top:530px;line-height:22px;height:22px;font-size:17px;color:#003a2e;font-weight:bold;left:1250px;transform:scaleX(1.076);transform-origin:0 50%;">Налоговая</div>
<div class="a" style="top:550px;line-height:22px;height:22px;font-size:17px;color:#003a2e;font-weight:bold;left:1250px;transform:scaleX(1.076);transform-origin:0 50%;">база</div>
<div class="a" style="top:530px;line-height:22px;height:22px;font-size:17px;color:#003a2e;font-weight:bold;left:1365.2px;transform:scaleX(1.076);transform-origin:0 50%;">Исчислено</div>
<div class="a" style="top:550px;line-height:22px;height:22px;font-size:17px;color:#003a2e;font-weight:bold;left:1365.2px;transform:scaleX(1.076);transform-origin:0 50%;">налога</div>
<div class="a" style="top:575px;line-height:22px;height:22px;font-size:17px;color:#003a2e;font-weight:bold;left:1365.2px;transform:scaleX(1.076);transform-origin:0 50%;">Всего</div>
<div class="a" style="top:530px;line-height:22px;height:22px;font-size:17px;color:#003a2e;font-weight:bold;left:1478.3px;transform:scaleX(1.076);transform-origin:0 50%;">Удержано</div>
<div class="a" style="top:550px;line-height:22px;height:22px;font-size:17px;color:#003a2e;font-weight:bold;left:1478.3px;transform:scaleX(1.076);transform-origin:0 50%;">налога</div>
<div class="a" style="top:575px;line-height:22px;height:22px;font-size:17px;color:#003a2e;font-weight:bold;left:1478.3px;transform:scaleX(1.076);transform-origin:0 50%;">Всего</div>
<svg class="a" style="left:1010px;top:534px" width="21" height="13" viewBox="0 0 21 13"><path d="M4.3 0.5 V8.6" stroke="#1f70c1" stroke-width="2.4" fill="none"/><path d="M0.9 7.2 H7.7 L4.3 11.6 Z" fill="#1f70c1"/><path d="M9.5 0.7H12.5" stroke="#b9c3b2" stroke-width="1"/><path d="M9.5 4H15" stroke="#aab3a4" stroke-width="1.3"/><path d="M9.5 7.3H17.2" stroke="#9aa396" stroke-width="1.5"/><path d="M9.5 10.7H19.6" stroke="#6b6f69" stroke-width="1.5"/></svg>
<svg class="a" style="left:1010px;top:578.5px" width="21" height="13" viewBox="0 0 21 13"><path d="M4.3 0.5 V8.6" stroke="#1f70c1" stroke-width="2.4" fill="none"/><path d="M0.9 7.2 H7.7 L4.3 11.6 Z" fill="#1f70c1"/><path d="M9.5 0.7H12.5" stroke="#b9c3b2" stroke-width="1"/><path d="M9.5 4H15" stroke="#aab3a4" stroke-width="1.3"/><path d="M9.5 7.3H17.2" stroke="#9aa396" stroke-width="1.5"/><path d="M9.5 10.7H19.6" stroke="#6b6f69" stroke-width="1.5"/></svg>
<svg class="a" style="left:1010px;top:602.5px" width="21" height="13" viewBox="0 0 21 13"><path d="M4.3 0.5 V8.6" stroke="#1f70c1" stroke-width="2.4" fill="none"/><path d="M0.9 7.2 H7.7 L4.3 11.6 Z" fill="#1f70c1"/><path d="M9.5 0.7H12.5" stroke="#b9c3b2" stroke-width="1"/><path d="M9.5 4H15" stroke="#aab3a4" stroke-width="1.3"/><path d="M9.5 7.3H17.2" stroke="#9aa396" stroke-width="1.5"/><path d="M9.5 10.7H19.6" stroke="#6b6f69" stroke-width="1.5"/></svg>
<svg class="a" style="left:1010px;top:626.5px" width="21" height="13" viewBox="0 0 21 13"><path d="M4.3 0.5 V8.6" stroke="#1f70c1" stroke-width="2.4" fill="none"/><path d="M0.9 7.2 H7.7 L4.3 11.6 Z" fill="#1f70c1"/><path d="M9.5 0.7H12.5" stroke="#b9c3b2" stroke-width="1"/><path d="M9.5 4H15" stroke="#aab3a4" stroke-width="1.3"/><path d="M9.5 7.3H17.2" stroke="#9aa396" stroke-width="1.5"/><path d="M9.5 10.7H19.6" stroke="#6b6f69" stroke-width="1.5"/></svg>
<svg class="a" style="left:1010px;top:650.5px" width="21" height="13" viewBox="0 0 21 13"><path d="M4.3 0.5 V8.6" stroke="#1f70c1" stroke-width="2.4" fill="none"/><path d="M0.9 7.2 H7.7 L4.3 11.6 Z" fill="#1f70c1"/><path d="M9.5 0.7H12.5" stroke="#b9c3b2" stroke-width="1"/><path d="M9.5 4H15" stroke="#aab3a4" stroke-width="1.3"/><path d="M9.5 7.3H17.2" stroke="#9aa396" stroke-width="1.5"/><path d="M9.5 10.7H19.6" stroke="#6b6f69" stroke-width="1.5"/></svg>
<svg class="a" style="left:591px;top:650.5px" width="21" height="13" viewBox="0 0 21 13"><path d="M4.3 0.5 V8.6" stroke="#1f70c1" stroke-width="2.4" fill="none"/><path d="M0.9 7.2 H7.7 L4.3 11.6 Z" fill="#1f70c1"/><path d="M9.5 0.7H12.5" stroke="#b9c3b2" stroke-width="1"/><path d="M9.5 4H15" stroke="#aab3a4" stroke-width="1.3"/><path d="M9.5 7.3H17.2" stroke="#9aa396" stroke-width="1.5"/><path d="M9.5 10.7H19.6" stroke="#6b6f69" stroke-width="1.5"/></svg>
<svg class="a" style="left:692px;top:650.5px" width="21" height="13" viewBox="0 0 21 13"><path d="M4.3 0.5 V8.6" stroke="#1f70c1" stroke-width="2.4" fill="none"/><path d="M0.9 7.2 H7.7 L4.3 11.6 Z" fill="#1f70c1"/><path d="M9.5 0.7H12.5" stroke="#b9c3b2" stroke-width="1"/><path d="M9.5 4H15" stroke="#aab3a4" stroke-width="1.3"/><path d="M9.5 7.3H17.2" stroke="#9aa396" stroke-width="1.5"/><path d="M9.5 10.7H19.6" stroke="#6b6f69" stroke-width="1.5"/></svg>
<svg class="a" style="left:530px;top:478px;z-index:3" width="520" height="70" viewBox="530 478 520 70" opacity="0.052">
<g fill="none" stroke="#0a0a2a" stroke-width="11.4">
<circle cx="571.6" cy="513.2" r="16.3"/><circle cx="616.2" cy="513.2" r="16.3"/>
</g>
<path d="M537.8 486.2 H549.6 C554 490.5 560 493.2 569 493.4 L557 502 C548.5 499 542 493.5 537.8 486.2 Z" fill="#0a0a2a"/>
<path d="M650 486.2 H638.2 C633.8 490.5 627.8 493.2 618.8 493.4 L630.8 502 C639.3 499 645.8 493.5 650 486.2 Z" fill="#0a0a2a"/>
<path d="M588.6 520 L599.2 520 L593.9 541.5 Z" fill="#0a0a2a"/>
<g transform="translate(672.6 532.2) scale(0.87 1)"><text x="0" y="0" font-family="Liberation Sans, sans-serif" font-weight="bold" font-size="54.5" fill="#0a0a2a" stroke="#0a0a2a" stroke-width="1.3" textLength="417" lengthAdjust="spacing">БУХЭКСПЕРТ</text></g>
</svg>
<div class="a" style="top:670px;line-height:26px;height:26px;font-size:20px;color:#003a2e;font-weight:bold;left:7px;">2025</div>
<div class="a" style="top:670px;line-height:26px;height:26px;font-size:20px;color:#2a2a2a;font-weight:bold;right:432.8499999999999px;">121 643,22</div>
<div class="a" style="top:670px;line-height:26px;height:26px;font-size:20px;color:#2a2a2a;font-weight:bold;right:219.39999999999986px;">121 643,22</div>
<div class="a" style="top:670px;line-height:26px;height:26px;font-size:20px;color:#2a2a2a;font-weight:bold;right:106.79999999999995px;">15 814</div>
<div class="a" style="top:670px;line-height:26px;height:26px;font-size:20px;color:#2a2a2a;font-weight:bold;right:6.599999999999909px;">15 814</div>
<div class="a" style="top:696px;line-height:21px;height:21px;font-size:16px;color:#003a2e;font-weight:bold;left:28px;transform:scaleX(0.925);transform-origin:0 50%;">Крон-Ц</div>
<div class="a" style="top:696px;line-height:21px;height:21px;font-size:16px;color:#2a2a2a;font-weight:bold;right:431.8499999999999px;transform:scaleX(0.965);transform-origin:100% 50%;">121 643,22</div>
<div class="a" style="top:696px;line-height:21px;height:21px;font-size:16px;color:#2a2a2a;font-weight:bold;right:218.39999999999986px;transform:scaleX(0.965);transform-origin:100% 50%;">121 643,22</div>
<div class="a" style="top:696px;line-height:21px;height:21px;font-size:16px;color:#2a2a2a;font-weight:bold;right:105.5px;transform:scaleX(0.965);transform-origin:100% 50%;">15 814</div>
<div class="a" style="top:696px;line-height:21px;height:21px;font-size:16px;color:#2a2a2a;font-weight:bold;right:5.599999999999909px;transform:scaleX(0.965);transform-origin:100% 50%;">15 814</div>
<div class="a" style="top:717px;line-height:20px;height:20px;font-size:15.6px;color:#383838;letter-spacing:0.04px;left:49.7px;">Налоговый орган №1, 123456789,</div>
<div class="a" style="top:717px;line-height:20px;height:20px;font-size:15.6px;color:#383838;letter-spacing:0.15px;right:430.45000000000005px;margin-right:0.15px;">121 643,22</div>
<div class="a" style="top:717px;line-height:20px;height:20px;font-size:15.6px;color:#383838;letter-spacing:0.15px;right:217.0px;margin-right:0.15px;">121 643,22</div>
<div class="a" style="top:717px;line-height:20px;height:20px;font-size:15.6px;color:#383838;letter-spacing:0.15px;right:104.10000000000014px;margin-right:0.15px;">15 814</div>
<div class="a" style="top:717px;line-height:20px;height:20px;font-size:15.6px;color:#383838;letter-spacing:0.15px;right:4.2000000000000455px;margin-right:0.15px;">15 814</div>
<div class="a" style="top:737px;line-height:20px;height:20px;font-size:15.6px;color:#383838;letter-spacing:0.2px;left:72.3px;">май 2025</div>
<div class="a" style="top:737px;line-height:20px;height:20px;font-size:15.6px;color:#383838;letter-spacing:-0.06px;right:430.45000000000005px;margin-right:-0.06px;">20 169,45</div>
<div class="a" style="top:737px;line-height:20px;height:20px;font-size:15.6px;color:#383838;letter-spacing:-0.06px;right:217.0px;margin-right:-0.06px;">20 169,45</div>
<div class="a" style="top:737px;line-height:20px;height:20px;font-size:15.6px;color:#383838;letter-spacing:-0.06px;right:104.10000000000014px;margin-right:-0.06px;">2 622</div>
<div class="a" style="top:737px;line-height:20px;height:20px;font-size:15.6px;color:#383838;letter-spacing:-0.06px;right:4.2000000000000455px;margin-right:-0.06px;">2 622</div>
<div class="a" style="top:758px;line-height:20px;height:20px;font-size:15.6px;color:#383838;letter-spacing:0.2px;left:72.3px;">июнь 2025</div>
<div class="a" style="top:758px;line-height:20px;height:20px;font-size:15.6px;color:#383838;letter-spacing:-0.06px;right:430.45000000000005px;margin-right:-0.06px;">37 182,46</div>
<div class="a" style="top:758px;line-height:20px;height:20px;font-size:15.6px;color:#383838;letter-spacing:-0.06px;right:217.0px;margin-right:-0.06px;">37 182,46</div>
<div class="a" style="top:758px;line-height:20px;height:20px;font-size:15.6px;color:#383838;letter-spacing:-0.06px;right:104.10000000000014px;margin-right:-0.06px;">4 834</div>
<div class="a" style="top:758px;line-height:20px;height:20px;font-size:15.6px;color:#383838;letter-spacing:-0.06px;right:4.2000000000000455px;margin-right:-0.06px;">4 834</div>
<div class="a" style="top:778px;line-height:20px;height:20px;font-size:15.6px;color:#383838;letter-spacing:0.2px;left:72.3px;">июль 2025</div>
<div class="a" style="top:778px;line-height:20px;height:20px;font-size:15.6px;color:#383838;letter-spacing:-0.06px;right:430.45000000000005px;margin-right:-0.06px;">45 071,57</div>
<div class="a" style="top:778px;line-height:20px;height:20px;font-size:15.6px;color:#383838;letter-spacing:-0.06px;right:217.0px;margin-right:-0.06px;">45 071,57</div>
<div class="a" style="top:778px;line-height:20px;height:20px;font-size:15.6px;color:#383838;letter-spacing:-0.06px;right:104.10000000000014px;margin-right:-0.06px;">5 860</div>
<div class="a" style="top:778px;line-height:20px;height:20px;font-size:15.6px;color:#383838;letter-spacing:-0.06px;right:4.2000000000000455px;margin-right:-0.06px;">5 860</div>
<div class="a" style="top:798px;line-height:20px;height:20px;font-size:15.6px;color:#383838;left:95.2px;">Начисление зарплаты и взносов 0000-000003 от 30.06.2025</div>
<div class="a" style="top:798px;line-height:20px;height:20px;font-size:15.6px;color:#383838;letter-spacing:-0.07px;left:617px;">13-22%</div>
<div class="a" style="top:798px;line-height:20px;height:20px;font-size:15.6px;color:#383838;letter-spacing:-0.05px;left:717px;">Оплата труда (основная налоговая база)</div>
<div class="a" style="top:798px;line-height:20px;height:20px;font-size:15.6px;color:#383838;letter-spacing:-0.06px;right:430.45000000000005px;margin-right:-0.06px;">18 558,06</div>
<div class="a" style="top:798px;line-height:20px;height:20px;font-size:15.6px;color:#383838;letter-spacing:-0.06px;right:217.0px;margin-right:-0.06px;">18 558,06</div>
<div class="a" style="top:798px;line-height:20px;height:20px;font-size:15.6px;color:#383838;letter-spacing:-0.06px;right:104.10000000000014px;margin-right:-0.06px;">2 412</div>
<div class="a" style="top:819px;line-height:20px;height:20px;font-size:15.6px;color:#383838;letter-spacing:0.06px;left:95.2px;">Ведомость через раздатчика 0000-000004 от 04.07.2025</div>
<div class="a" style="top:819px;line-height:20px;height:20px;font-size:15.6px;color:#383838;letter-spacing:-0.07px;left:617px;">13-22%</div>
<div class="a" style="top:819px;line-height:20px;height:20px;font-size:15.6px;color:#383838;letter-spacing:-0.05px;left:717px;">Оплата труда (основная налоговая база)</div>
<div class="a" style="top:819px;line-height:20px;height:20px;font-size:15.6px;color:#383838;letter-spacing:-0.06px;right:4.2000000000000455px;margin-right:-0.06px;">2 412</div>
<div class="a" style="top:839px;line-height:20px;height:20px;font-size:15.6px;color:#383838;letter-spacing:0.06px;left:95.2px;">Ведомость через раздатчика 0000-000005 от 15.07.2025</div>
<div class="a" style="top:839px;line-height:20px;height:20px;font-size:15.6px;color:#383838;letter-spacing:-0.07px;left:617px;">13-22%</div>
<div class="a" style="top:839px;line-height:20px;height:20px;font-size:15.6px;color:#383838;letter-spacing:-0.05px;left:717px;">Оплата труда (основная налоговая база)</div>
<div class="a" style="top:839px;line-height:20px;height:20px;font-size:15.6px;color:#383838;letter-spacing:-0.06px;right:4.2000000000000455px;margin-right:-0.06px;">1 105</div>
<div class="a" style="top:859px;line-height:20px;height:20px;font-size:15.6px;color:#383838;left:95.2px;">Начисление за первую половину месяца 0000-000003 от 15.07.2025</div>
<div class="a" style="top:859px;line-height:20px;height:20px;font-size:15.6px;color:#383838;letter-spacing:-0.07px;left:617px;">13-22%</div>
<div class="a" style="top:859px;line-height:20px;height:20px;font-size:15.6px;color:#383838;letter-spacing:-0.05px;left:717px;">Оплата труда (основная налоговая база)</div>
<div class="a" style="top:859px;line-height:20px;height:20px;font-size:15.6px;color:#383838;letter-spacing:-0.06px;right:430.45000000000005px;margin-right:-0.06px;">18 018,51</div>
<div class="a" style="top:859px;line-height:20px;height:20px;font-size:15.6px;color:#383838;letter-spacing:-0.06px;right:217.0px;margin-right:-0.06px;">18 018,51</div>
<div class="a" style="top:859px;line-height:20px;height:20px;font-size:15.6px;color:#383838;letter-spacing:-0.06px;right:104.10000000000014px;margin-right:-0.06px;">2 343</div>
<div class="a" style="top:880px;line-height:20px;height:20px;font-size:15.6px;color:#383838;letter-spacing:0.09px;left:95.2px;">Премия 0000-000001 от 15.07.2025</div>
<div class="a" style="top:880px;line-height:20px;height:20px;font-size:15.6px;color:#383838;letter-spacing:-0.07px;left:617px;">13-22%</div>
<div class="a" style="top:880px;line-height:20px;height:20px;font-size:15.6px;color:#383838;letter-spacing:-0.05px;left:717px;">Оплата труда (основная налоговая база)</div>
<div class="a" style="top:880px;line-height:20px;height:20px;font-size:15.6px;color:#383838;letter-spacing:-0.06px;right:430.45000000000005px;margin-right:-0.06px;">8 495,00</div>
<div class="a" style="top:880px;line-height:20px;height:20px;font-size:15.6px;color:#383838;letter-spacing:-0.06px;right:217.0px;margin-right:-0.06px;">8 495,00</div>
<div class="a" style="top:880px;line-height:20px;height:20px;font-size:15.6px;color:#383838;letter-spacing:-0.06px;right:104.10000000000014px;margin-right:-0.06px;">1 105</div>
<div class="a" style="top:900px;line-height:20px;height:20px;font-size:15.6px;color:#383838;letter-spacing:0.06px;left:95.2px;">Ведомость через раздатчика 0000-000006 от 18.07.2025</div>
<div class="a" style="top:900px;line-height:20px;height:20px;font-size:15.6px;color:#383838;letter-spacing:-0.07px;left:617px;">13-22%</div>
<div class="a" style="top:900px;line-height:20px;height:20px;font-size:15.6px;color:#383838;letter-spacing:-0.05px;left:717px;">Оплата труда (основная налоговая база)</div>
<div class="a" style="top:900px;line-height:20px;height:20px;font-size:15.6px;color:#383838;letter-spacing:-0.06px;right:4.2000000000000455px;margin-right:-0.06px;">2 343</div>
<div class="a" style="top:921px;line-height:20px;height:20px;font-size:15.6px;color:#383838;left:95.2px;">Начисление зарплаты и взносов 0000-000004 от 31.07.2025</div>
<div class="a" style="top:921px;line-height:20px;height:20px;font-size:15.6px;color:#383838;letter-spacing:-0.07px;left:617px;">13-22%</div>
<div class="a" style="top:921px;line-height:20px;height:20px;font-size:15.6px;color:#383838;letter-spacing:-0.05px;left:717px;">Оплата труда (основная налоговая база)</div>
<div class="a" style="top:941px;line-height:20px;height:20px;font-size:15.6px;color:#383838;letter-spacing:0.2px;left:72.3px;">авг. 2025</div>
<div class="a" style="top:941px;line-height:20px;height:20px;font-size:15.6px;color:#383838;letter-spacing:-0.06px;right:430.45000000000005px;margin-right:-0.06px;">19 219,74</div>
<div class="a" style="top:941px;line-height:20px;height:20px;font-size:15.6px;color:#383838;letter-spacing:-0.06px;right:217.0px;margin-right:-0.06px;">19 219,74</div>
<div class="a" style="top:941px;line-height:20px;height:20px;font-size:15.6px;color:#383838;letter-spacing:-0.06px;right:104.10000000000014px;margin-right:-0.06px;">2 498</div>
<div class="a" style="top:941px;line-height:20px;height:20px;font-size:15.6px;color:#383838;letter-spacing:-0.06px;right:4.2000000000000455px;margin-right:-0.06px;">2 498</div>
<div class="a" style="top:961px;line-height:20px;height:20px;font-size:15.6px;color:#383838;left:95.2px;">Начисление зарплаты и взносов 0000-000004 от 31.07.2025</div>
<div class="a" style="top:961px;line-height:20px;height:20px;font-size:15.6px;color:#383838;letter-spacing:-0.07px;left:617px;">13-22%</div>
<div class="a" style="top:961px;line-height:20px;height:20px;font-size:15.6px;color:#383838;letter-spacing:-0.05px;left:717px;">Оплата труда (основная налоговая база)</div>
<div class="a" style="top:961px;line-height:20px;height:20px;font-size:15.6px;color:#383838;letter-spacing:-0.06px;right:430.45000000000005px;margin-right:-0.06px;">19 219,74</div>
<div class="a" style="top:961px;line-height:20px;height:20px;font-size:15.6px;color:#383838;letter-spacing:-0.06px;right:217.0px;margin-right:-0.06px;">19 219,74</div>
<div class="a" style="top:961px;line-height:20px;height:20px;font-size:15.6px;color:#383838;letter-spacing:-0.06px;right:104.10000000000014px;margin-right:-0.06px;">2 498</div>
<div class="a" style="top:982px;line-height:20px;height:20px;font-size:15.6px;color:#383838;letter-spacing:0.06px;left:95.2px;">Ведомость через раздатчика 0000-000008 от 05.08.2025</div>
<div class="a" style="top:982px;line-height:20px;height:20px;font-size:15.6px;color:#383838;letter-spacing:-0.07px;left:617px;">13-22%</div>
<div class="a" style="top:982px;line-height:20px;height:20px;font-size:15.6px;color:#383838;letter-spacing:-0.05px;left:717px;">Оплата труда (основная налоговая база)</div>
<div class="a" style="top:982px;line-height:20px;height:20px;font-size:15.6px;color:#383838;letter-spacing:-0.06px;right:4.2000000000000455px;margin-right:-0.06px;">2 498</div>
<div class="a" style="top:1002px;line-height:22px;height:22px;font-size:17px;color:#003a2e;font-weight:bold;left:5.3px;transform:scaleX(1.076);transform-origin:0 50%;">Итого</div>
<div class="a" style="top:1001px;line-height:26px;height:26px;font-size:20px;color:#2a2a2a;font-weight:bold;right:432.8499999999999px;">121 643,22</div>
<div class="a" style="top:1001px;line-height:26px;height:26px;font-size:20px;color:#2a2a2a;font-weight:bold;right:219.39999999999986px;">121 643,22</div>
<div class="a" style="top:1001px;line-height:26px;height:26px;font-size:20px;color:#2a2a2a;font-weight:bold;right:106.5px;">15 814</div>
<div class="a" style="top:1001px;line-height:26px;height:26px;font-size:20px;color:#2a2a2a;font-weight:bold;right:6.599999999999909px;">15 814</div>
<svg class="a" style="left:1420px;top:870px" width="60" height="16" viewBox="1420 870 60 16"><path d="M1427.1 878.1 H1472.4" stroke="#fa3b41" stroke-width="3" stroke-linecap="round"/></svg>
</body></html>
